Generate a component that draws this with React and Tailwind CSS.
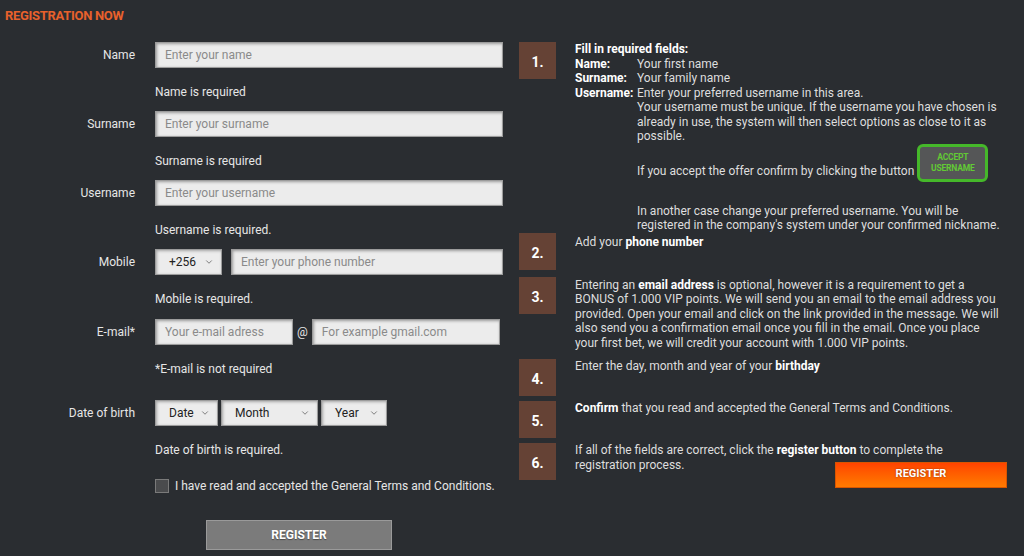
import { ChevronDown } from "lucide-react";

const inputCls =
  "h-[26px] bg-[#ececec] border border-[#9c9c9c] shadow-[inset_1px_1px_3px_rgba(0,0,0,0.35)] px-[9px] text-[12px] text-[#222] placeholder:text-[#8a8a8a] outline-none";

const Select = ({ label, width, textPad = "pl-[13px]" }) => (
  <div
    className={`h-[26px] ${width} bg-[#ececec] border border-[#9c9c9c] shadow-[inset_1px_1px_3px_rgba(0,0,0,0.3)] flex items-center justify-between ${textPad} pr-[7px] text-[12px] text-[#222]`}>
    <span>{label}</span>
    <ChevronDown className="w-[10px] h-[10px] text-[#555]" strokeWidth={1.75} />
  </div>
);

const Row = ({ label, children, top = "mt-[11px]" }) => (
  <div className={`flex items-center h-[26px] ${top}`}>
    <div className="w-[135px] text-right text-[12px] text-[#e6e6e6]">{label}</div>
    <div className="ml-[20px] flex items-center">{children}</div>
  </div>
);

const Hint = ({ children, top = "mt-[16px]" }) => (
  <div className={`pl-[155px] ${top} leading-[16px] text-[12px] text-[#e6e6e6]`}>{children}</div>
);

const Num = ({ n }) => (
  <div className="w-[37px] h-[37px] shrink-0 bg-[#654235] flex items-center justify-center pt-[4px] text-[14px] font-bold text-white">
    {n}
  </div>
);

const Step = ({ n, children, top = "mt-[5px]" }) => (
  <div className={`flex items-start ${top}`}>
    <Num n={n} />
    <div className="ml-[19px] w-[432px] text-[12px] leading-[14.5px] text-[#dedede]">{children}</div>
  </div>
);

const B = ({ children }) => <span className="font-bold text-white">{children}</span>;

export default function App() {
  return (
    <div
      className="w-[1024px] h-[556px] bg-[#2a2d31] overflow-hidden"
      style={{ fontFamily: "Roboto, 'Liberation Sans', sans-serif" }}>
      <div className="h-[42px] pt-[7px] pl-[5px]">
        <h1 className="text-[13px] font-bold text-[#e8612c] tracking-[-0.3px] leading-[17px]">
          REGISTRATION NOW
        </h1>
      </div>

      <div className="flex">
        {/* Left: form */}
        <div className="w-[503px] shrink-0">
          <Row label="Name" top="mt-0">
            <input className={`${inputCls} w-[348px]`} placeholder="Enter your name" />
          </Row>
          <Hint>Name is required</Hint>

          <Row label="Surname">
            <input className={`${inputCls} w-[348px]`} placeholder="Enter your surname" />
          </Row>
          <Hint>Surname is required</Hint>

          <Row label="Username">
            <input className={`${inputCls} w-[348px]`} placeholder="Enter your username" />
          </Row>
          <Hint>Username is required.</Hint>

          <Row label="Mobile">
            <Select label="+256" width="w-[67px]" />
            <input className={`${inputCls} w-[272px] ml-[9px]`} placeholder="Enter your phone number" />
          </Row>
          <Hint>Mobile is required.</Hint>

          <Row label="E-mail*" top="mt-[12px]">
            <input className={`${inputCls} w-[138px]`} placeholder="Your e-mail adress" />
            <span className="mx-[4px] text-[12px] text-[#e6e6e6]">@</span>
            <input className={`${inputCls} w-[188px]`} placeholder="For example gmail.com" />
          </Row>
          <Hint>*E-mail is not required</Hint>

          <Row label="Date of birth" top="mt-[23px]">
            <Select label="Date" width="w-[63px]" />
            <div className="ml-[3px]">
              <Select label="Month" width="w-[97px]" />
            </div>
            <div className="ml-[3px]">
              <Select label="Year" width="w-[66px]" />
            </div>
          </Row>
          <Hint>Date of birth is required.</Hint>

          <label className="mt-[20px] pl-[155px] flex items-center h-[16px] text-[12px] text-[#e6e6e6]">
            <span className="w-[14px] h-[14px] bg-[#4a4b4d] border border-[#7a7a7a]" />
            <span className="ml-[6px]">I have read and accepted the General Terms and Conditions.</span>
          </label>

          <button className="mt-[26px] ml-[206px] w-[186px] h-[30px] bg-[#7b7b7b] border border-[#9a9a9a] text-[12px] font-bold text-white [text-shadow:0_1px_1px_rgba(0,0,0,0.4)]">
            REGISTER
          </button>
        </div>

        {/* Right: instructions */}
        <div className="ml-[16px]">
          <Step n="1." top="mt-0">
            <div className="font-bold text-white">Fill in required fields:</div>
            <div className="grid grid-cols-[62px_1fr]">
              <div className="font-bold text-white">Name:</div>
              <div>Your first name</div>
              <div className="font-bold text-white">Surname:</div>
              <div>Your family name</div>
              <div className="font-bold text-white">Username:</div>
              <div>
                <div>Enter your preferred username in this area.</div>
                <div>
                  Your username must be unique. If the username you have chosen is
                  <br />
                  already in use, the system will then select options as close to it as
                  <br />
                  possible.
                </div>
                <div className="flex items-end h-[38px]">
                  <span className="pb-[3px]">If you accept the offer confirm by clicking the button</span>
                  <span className="ml-[3px] w-[71px] h-[38px] rounded-[6px] border-[3px] border-[#45b82a] bg-[#555657] flex flex-col items-center justify-center text-[8.5px] leading-[11px] font-bold text-[#62c935] tracking-[-0.2px]">
                    <span>ACCEPT</span>
                    <span>USERNAME</span>
                  </span>
                </div>
                <div className="mt-[22px]">
                  In another case change your preferred username. You will be
                  <br />
                  registered in the company's system under your confirmed nickname.
                </div>
              </div>
            </div>
          </Step>

          <Step n="2." top="mt-0">
            <div className="pt-[2px]">
              Add your <B>phone number</B>
            </div>
          </Step>

          <Step n="3." top="mt-[7px]">
            <div className="pt-[1px]">
              Entering an <B>email address</B> is optional, however it is a requirement to get a
              <br />
              BONUS of 1.000 VIP points. We will send you an email to the email address you
              <br />
              provided. Open your email and click on the link provided in the message. We will
              <br />
              also send you a confirmation email once you fill in the email. Once you place
              <br />
              your first bet, we will credit your account with 1.000 VIP points.
            </div>
          </Step>

          <Step n="4." top="mt-[9px]">
            Enter the day, month and year of your <B>birthday</B>
          </Step>

          <Step n="5.">
            <B>Confirm</B> that you read and accepted the General Terms and Conditions.
          </Step>

          <Step n="6.">
            <div>
              If all of the fields are correct, click the <B>register button</B> to complete the
            </div>
            <div className="flex items-start">
              <span>registration process.</span>
              <button className="ml-auto mt-[4px] w-[172px] h-[26px] bg-gradient-to-b from-[#ff4200] to-[#ff7a00] border border-[#d95500] text-[11px] font-bold text-white [text-shadow:0_0_2px_rgba(120,40,0,0.8)]">
                REGISTER
              </button>
            </div>
          </Step>
        </div>
      </div>
    </div>
  );
}
